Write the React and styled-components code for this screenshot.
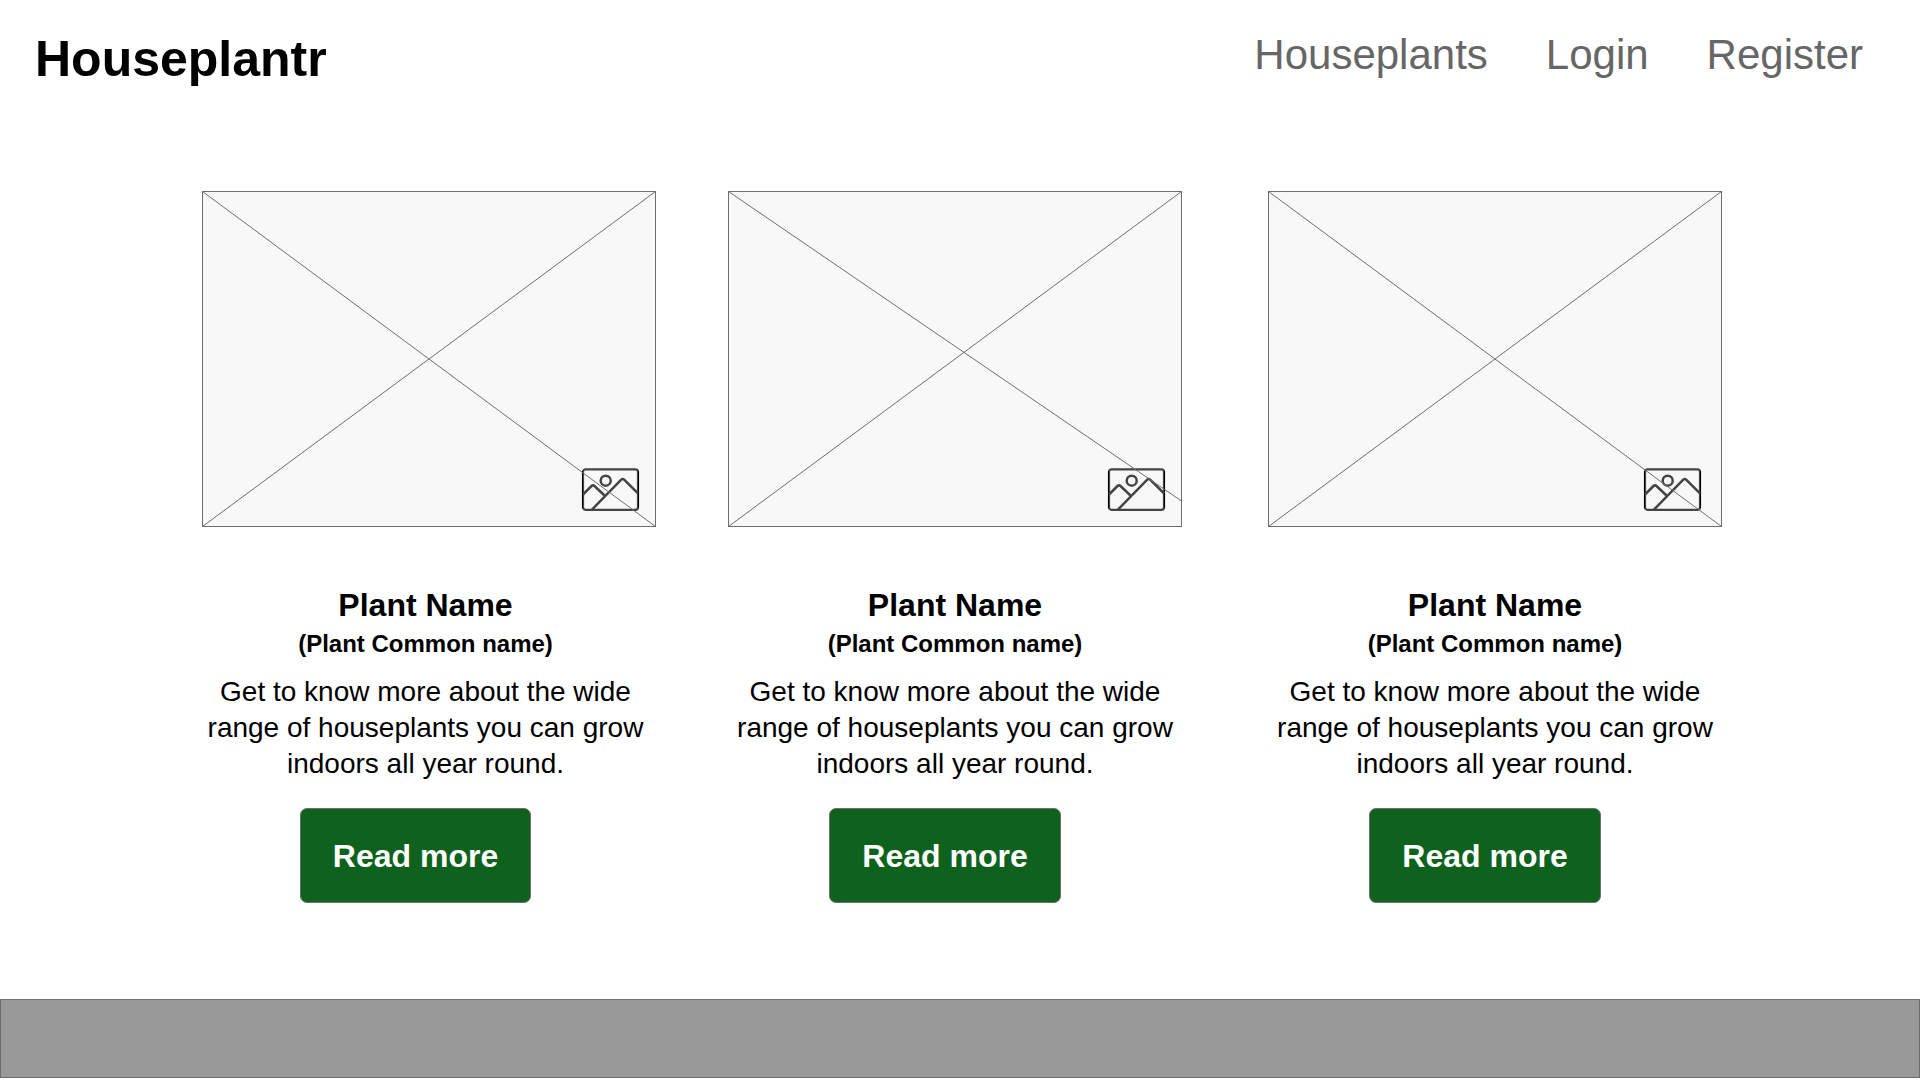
import React from "react";
import styled, { createGlobalStyle } from "styled-components";

const GlobalStyle = createGlobalStyle`
  *, *::before, *::after { box-sizing: border-box; }
  body {
    margin: 0;
    background: #fff;
    color: #000;
    font-family: "Liberation Sans", Arial, Helvetica, sans-serif;
  }
`;

const Header = styled.header`
  display: flex;
  align-items: flex-start;
  justify-content: space-between;
  padding: 31px 57px 0 35px;
`;

const Brand = styled.h1`
  margin: 0;
  font-size: 50px;
  line-height: 56px;
  font-weight: 700;
`;

const Nav = styled.nav`
  display: flex;
  gap: 58px;
`;

const NavLink = styled.a`
  color: #666;
  font-size: 42px;
  line-height: 48px;
  text-decoration: none;
`;

const PlantGrid = styled.main`
  display: grid;
  grid-template-columns: 461fr 72fr 454fr 86fr 454fr;
  padding: 104px 198px 96px 195px;
`;

const Card = styled.article`
  display: flex;
  flex-direction: column;
  align-items: center;
  grid-column: ${({ $track }) => $track};
  text-align: center;
`;

const Picture = styled.svg`
  display: block;
  align-self: flex-end;
  width: 100%;
  max-width: 454px;
  height: auto;
  margin-bottom: 60px;
`;

const Name = styled.h2`
  margin: 0 0 7px;
  font-size: 32px;
  line-height: 36px;
`;

const CommonName = styled.h3`
  margin: 0 0 16px;
  font-size: 24px;
  line-height: 28px;
`;

const Description = styled.p`
  margin: 0 0 26px;
  font-size: 28px;
  line-height: 36px;
`;

const Actions = styled.div`
  padding-right: 20px;
`;

const Button = styled.button`
  display: block;
  height: 95px;
  padding: 0 32px;
  border: 1px solid #6e6e6e;
  border-radius: 7px;
  background: #0f611e;
  color: #fff;
  font: 700 32px/36px "Liberation Sans", Arial, Helvetica, sans-serif;
  cursor: pointer;
`;

const Footer = styled.footer`
  height: 79px;
  margin-bottom: 2px;
  border: 1px solid #6e6e6e;
  background: #999;
`;

function Placeholder({ iconX, diagonalEnd }) {
  return (
    <Picture viewBox="0 0 454 336" role="img" aria-label="Plant photo">
      <rect x="0.5" y="0.5" width="453" height="335" fill="#f8f8f8" stroke="#6e6e6e" />
      <g transform={`translate(${iconX} 277)`} fill="none" stroke="#444" strokeWidth="2.5">
        <rect x="1" y="1.300" width="55" height="40.500" rx="2.500" strokeWidth="2.200" />
        <path d="M0.500 3V40M56.500 3V40" stroke="#000" strokeWidth="1" />
        <circle cx="23.700" cy="12.700" r="5" />
        <path d="M1 26.500L9.500 18Q11 16.800 12.500 18L22.500 27.500" />
        <path d="M10 41.500L39 11.800Q40.700 10.200 42.400 11.800L56 25.300" />
      </g>
      <path d={`M0.500 0.500L453.500 ${diagonalEnd}M0.500 335.500L453.500 0.500`} fill="none" stroke="#6e6e6e" />
    </Picture>
  );
}

const plants = [
  { id: "first", track: 1, iconX: 380, diagonalEnd: 335.5 },
  { id: "second", track: 3, iconX: 380, diagonalEnd: 310 },
  { id: "third", track: 5, iconX: 376, diagonalEnd: 335.5 },
];

export default function App() {
  return (
    <>
      <GlobalStyle />
      <Header>
        <Brand>Houseplantr</Brand>
        <Nav aria-label="Main">
          <NavLink href="#houseplants">Houseplants</NavLink>
          <NavLink href="#login">Login</NavLink>
          <NavLink href="#register">Register</NavLink>
        </Nav>
      </Header>
      <PlantGrid>
        {plants.map((plant) => (
          <Card key={plant.id} $track={plant.track}>
            <Placeholder iconX={plant.iconX} diagonalEnd={plant.diagonalEnd} />
            <Name>Plant Name</Name>
            <CommonName>(Plant Common name)</CommonName>
            <Description>
              Get to know more about the wide range of houseplants you can grow indoors all year round.
            </Description>
            <Actions>
              <Button type="button">Read more</Button>
            </Actions>
          </Card>
        ))}
      </PlantGrid>
      <Footer />
    </>
  );
}
